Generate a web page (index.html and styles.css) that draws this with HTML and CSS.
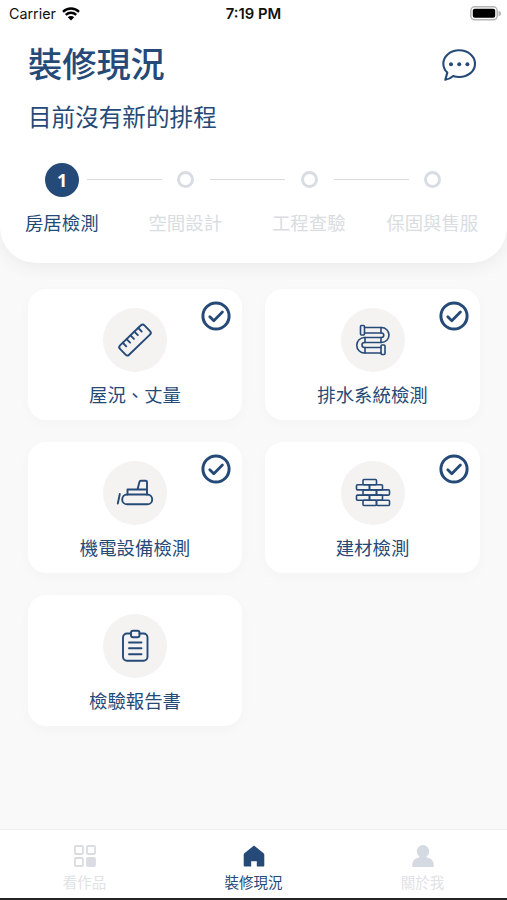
FILE: index.html
```html
<!DOCTYPE html>
<html lang="zh-Hant">
<head>
  <meta charset="UTF-8" />
  <meta name="viewport" content="width=device-width, initial-scale=1.0"/>
  <title>裝修現況</title>
  <link rel="stylesheet" href="styles.css">
</head>
<body>
  <!-- shared check mark -->
  <svg class="defs" width="0" height="0">
    <symbol id="check" viewBox="0 0 30 30">
      <circle cx="15" cy="15" r="13.1" stroke-width="3"/>
      <path d="M8.8 15.7l4 4 8.6-8.6" stroke-width="2.8"/>
    </symbol>
  </svg>

  <div class="app">
    <header class="header">
      <div class="status-bar">
        <div class="carrier">
          <span>Carrier</span>
          <svg width="18" height="14" viewBox="0 0 18 14">
            <path d="M1 4.8a11.5 11.5 0 0 1 16 0M3.8 7.8a7.5 7.5 0 0 1 10.4 0" fill="none" stroke="#000" stroke-width="2.4"/>
            <path d="M5.8 10.3a4.6 4.6 0 0 1 6.4 0L9 13.6z"/>
          </svg>
        </div>
        <div class="time">7:19 PM</div>
        <div class="battery">
          <svg width="31" height="15" viewBox="0 0 31 15">
            <rect x=".8" y=".8" width="26.4" height="13" rx="4" fill="#fff" stroke="#b5b5b5" stroke-width="1.5"/>
            <rect x="2.8" y="2.8" width="22.4" height="9" rx="2"/>
            <path d="M28.5 5a2.5 2.5 0 0 1 0 5z" fill="#b5b5b5"/>
          </svg>
        </div>
      </div>

      <div class="title-row">
        <h1>裝修現況</h1>
        <svg class="chat" width="34" height="33" viewBox="0 0 34 33">
          <path d="M3.3 30.8L5.3 23.6A12.8 12.8 0 0 1 1.3 14.7C1.3 7.3 8.3 1.3 17.2 1.3S33 7.3 33 14.7 26.1 28 17.2 28C15 28 13 27.7 11.2 27.1C8.8 29.3 6 30.5 3.3 30.8z" fill="none" stroke="#264a77" stroke-width="2.1" stroke-linejoin="round"/>
          <circle cx="9" cy="15.2" r="2"/>
          <circle cx="17.2" cy="15.2" r="2"/>
          <circle cx="25.4" cy="15.2" r="2"/>
        </svg>
      </div>
      <p class="subtitle">目前沒有新的排程</p>

      <div class="track">
        <div class="stop"><span class="current">1</span></div>
        <div class="line"></div>
        <div class="stop"><span class="dot"></span></div>
        <div class="line"></div>
        <div class="stop"><span class="dot"></span></div>
        <div class="line"></div>
        <div class="stop"><span class="dot"></span></div>
      </div>
      <div class="step-labels">
        <span class="active">房居檢測</span>
        <span>空間設計</span>
        <span>工程查驗</span>
        <span>保固與售服</span>
      </div>
    </header>

    <main class="cards">
      <div class="card">
        <svg class="done"><use href="#check"/></svg>
        <div class="icon">
          <svg width="38" height="38" viewBox="0 0 38 38">
            <g transform="rotate(-44 19 19)">
              <rect x="2" y="12.5" width="34" height="13" rx="2.5"/>
              <path d="M8.3 12.5v5M13.6 12.5v5M19 12.5v5M24.4 12.5v5M29.7 12.5v5"/>
            </g>
          </svg>
        </div>
        <p>屋況、丈量</p>
      </div>

      <div class="card">
        <svg class="done"><use href="#check"/></svg>
        <div class="icon">
          <svg class="thin" width="38" height="38" viewBox="0 0 38 38">
            <rect x="6.5" y="4.5" width="4" height="9.5" rx="1"/>
            <rect x="27" y="24" width="4" height="9.5" rx="1"/>
            <path d="M10.5 6.5H27.5a7.5 7.5 0 0 1 0 15H10.5a2.5 2.5 0 0 0 0 5H27"/>
            <path d="M10.5 12H27.5a2.2 2.2 0 0 1 0 4.5H10.5a7.7 7.7 0 0 0 0 15.5H27"/>
            <path d="M27 6.5V12M27 16.5v5M11 16.5v5M11 26.5V32"/>
          </svg>
        </div>
        <p>排水系統檢測</p>
      </div>

      <div class="card">
        <svg class="done"><use href="#check"/></svg>
        <div class="icon">
          <svg width="38" height="38" viewBox="0 0 38 38">
            <rect x="6.2" y="20.5" width="30" height="9.8" rx="4.9"/>
            <path d="M11.5 20.5v-5h10l2-7.8q.3-1 1.300-1h5q1.200 0 1.200 1.200v12.600M21.500 15.500h9.500M3.800 20l-2 9.500"/>
          </svg>
        </div>
        <p>機電設備檢測</p>
      </div>

      <div class="card">
        <svg class="done"><use href="#check"/></svg>
        <div class="icon">
          <svg class="thin" width="38" height="38" viewBox="0 0 38 38">
            <rect x="9" y="5.5" width="13.5" height="5.2" rx="1"/>
            <rect x="2.5" y="10.7" width="13" height="5.2" rx="1"/>
            <rect x="15.5" y="10.7" width="13" height="5.2" rx="1"/>
            <rect x="9" y="15.9" width="13.5" height="5.2" rx="1"/>
            <rect x="22.5" y="15.9" width="13" height="5.2" rx="1"/>
            <rect x="2.5" y="21.1" width="13" height="5.2" rx="1"/>
            <rect x="15.5" y="21.1" width="13" height="5.2" rx="1"/>
            <rect x="9" y="26.3" width="13.5" height="5.2" rx="1"/>
            <rect x="22.5" y="26.3" width="13" height="5.2" rx="1"/>
          </svg>
        </div>
        <p>建材檢測</p>
      </div>

      <div class="card">
        <div class="icon">
          <svg width="38" height="38" viewBox="0 0 38 38">
            <path d="M15 6.5h-4a4 4 0 0 0-4 4v19.3a4 4 0 0 0 4 4h16.5a4 4 0 0 0 4-4V10.5a4 4 0 0 0-4-4h-4"/>
            <rect x="15" y="3.7" width="8.5" height="6.5" rx="2"/>
            <path d="M13 15.5h12.5M13 21.3h12.5M13 27.2h12.5"/>
          </svg>
        </div>
        <p>檢驗報告書</p>
      </div>
    </main>

    <nav class="tab-bar">
      <div class="tab">
        <svg width="24" height="24" viewBox="0 0 24 24" fill="none" stroke="#d9dde3" stroke-width="1.8">
          <rect x="1.9" y="2" width="8" height="8" rx="1"/>
          <rect x="14" y="2" width="8" height="8" rx="1"/>
          <rect x="1.9" y="14" width="8" height="8" rx="1"/>
          <rect x="14" y="14" width="8" height="8" rx="1" fill="#d9dde3"/>
        </svg>
        <span>看作品</span>
      </div>
      <div class="tab active">
        <svg width="24" height="24" viewBox="0 0 24 24" fill="#264a77">
          <path d="M12 1.5L21.6 9.3Q22.3 9.9 22.3 10.8V21.6Q22.3 22.6 21.3 22.6H14.8V17.2H9.2V22.6H2.7Q1.7 22.6 1.7 21.6V10.8Q1.7 9.9 2.4 9.3z"/>
        </svg>
        <span>裝修現況</span>
      </div>
      <div class="tab">
        <svg width="24" height="24" viewBox="0 0 24 24" fill="#d5dae2">
          <circle cx="12" cy="7.3" r="6.2"/>
          <path d="M8.500 11h7v1.500q0 .8.800 1.100c4.300 1.200 6.500 3.300 6.500 8.200q0 1.200-1.100 1.200H2.300q-1.100 0-1.100-1.200c0-4.900 2.200-7 6.500-8.200q.8-.3.800-1.100z"/>
        </svg>
        <span>關於我</span>
      </div>
    </nav>
  </div>
</body>
</html>
```
FILE: styles.css
```css
* {
  box-sizing: border-box;
  margin: 0;
  padding: 0;
}

body {
  font-family: "Noto Sans CJK TC", sans-serif;
  color: #264a77;
  background: #f9f9f9;
}

svg {
  display: block;
}

.defs {
  position: absolute;
}

.app {
  display: flex;
  flex-direction: column;
  height: 100vh;
  overflow: hidden;
  border-bottom: 2px solid #252525;
}

.header {
  height: 263px;
  background: #fff;
  border-radius: 0 0 36px 36px;
  box-shadow: 0 4px 18px rgba(0, 0, 0, 0.06);
}

.status-bar {
  display: grid;
  grid-template-columns: 1fr auto 1fr;
  align-items: center;
  height: 27px;
  padding: 0 6px 0 9px;
  font-family: Inter, sans-serif;
  font-size: 14.3px;
  color: #111;
}

.carrier {
  display: flex;
  align-items: center;
  gap: 6px;
}

.time {
  margin-right: 3px;
  font-size: 14.8px;
  font-weight: 600;
}

.battery {
  justify-self: end;
}

.title-row {
  display: flex;
  justify-content: space-between;
  align-items: center;
  height: 71px;
  padding: 0 31px 0 28px;
}

h1 {
  margin-bottom: 2px;
  font-size: 34.2px;
  line-height: 50px;
  font-weight: 500;
}

.chat {
  margin-top: 6px;
  fill: #264a77;
}

.subtitle {
  height: 36px;
  padding-left: 28px;
  font-size: 23.6px;
  line-height: 36px;
}

.track {
  display: flex;
  align-items: center;
  height: 35px;
  margin: 28px 0 0 38px;
}

.stop {
  display: flex;
  justify-content: center;
  width: 48.5px;
}

.line {
  width: 75px;
  height: 1px;
  background: #d8dce1;
}

.current {
  width: 34px;
  height: 34px;
  border-radius: 50%;
  background: #264a77;
  color: #fff;
  font: 700 18px/34px "Noto Sans", sans-serif;
  text-align: center;
}

.dot {
  width: 17px;
  height: 17px;
  border: 3.5px solid #d8dce3;
  border-radius: 50%;
}

.step-labels {
  display: grid;
  grid-template-columns: repeat(4, 123.5px);
  margin-top: 11px;
  font-size: 18.4px;
  line-height: 28px;
  text-align: center;
  color: #d9dde2;
}

.step-labels .active {
  color: #264a77;
}

.cards {
  flex: 1;
  display: grid;
  grid-template-columns: 214px 215px;
  grid-auto-rows: 131px;
  align-content: start;
  gap: 22px 23px;
  padding: 26px 27px 0 28px;
}

.card {
  position: relative;
  display: flex;
  flex-direction: column;
  align-items: center;
  padding-top: 19px;
  background: #fff;
  border-radius: 18px;
  box-shadow: 0 4px 14px rgba(0, 0, 0, 0.025);
}

.card p {
  margin-top: 8px;
  font-size: 18.4px;
  line-height: 28px;
}

.done {
  position: absolute;
  top: 12px;
  right: 11px;
  width: 30px;
  height: 30px;
  fill: none;
  stroke: #264a77;
  stroke-linecap: round;
  stroke-linejoin: round;
}

.icon {
  display: flex;
  justify-content: center;
  align-items: center;
  width: 64px;
  height: 64px;
  border-radius: 50%;
  background: #f4f3f2;
}

.icon svg {
  fill: none;
  stroke: #264a77;
  stroke-width: 1.9;
  stroke-linecap: round;
  stroke-linejoin: round;
}

.icon .thin {
  stroke-width: 1.6;
}

.tab-bar {
  display: grid;
  grid-template-columns: repeat(3, 1fr);
  height: 69px;
  background: #fff;
  border-top: 1px solid #eee;
}

.tab {
  display: flex;
  flex-direction: column;
  align-items: center;
  padding-top: 14px;
  color: #dfe2e6;
}

.tab span {
  margin-top: 3px;
  font-size: 14.5px;
  line-height: 22px;
}

.tab.active {
  color: #264a77;
}
```
